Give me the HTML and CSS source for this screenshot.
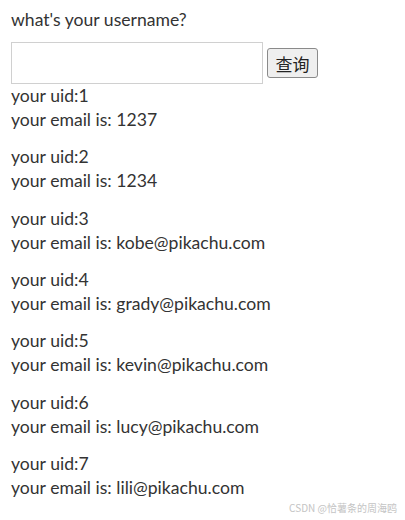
FILE: index.html
```html
<!DOCTYPE html>
<html lang="zh">
<head>
  <meta charset="UTF-8" />
  <title>查询</title>
  <meta name="viewport" content="width=device-width, initial-scale=1.0">
  <link rel="stylesheet" href="styles.css">
</head>
<body>
  <div class="page">
    <form class="search-form">
      <p class="question">what's your username?</p>
      <div class="search-row">
        <input type="text" class="search-input" name="username">
        <input type="submit" class="search-btn" value="查询">
      </div>
    </form>

    <div class="result-list">
      <p class="result">your uid:1<br>your email is: 1237</p>
      <p class="result">your uid:2<br>your email is: 1234</p>
      <p class="result">your uid:3<br>your email is: kobe@pikachu.com</p>
      <p class="result">your uid:4<br>your email is: grady@pikachu.com</p>
      <p class="result">your uid:5<br>your email is: kevin@pikachu.com</p>
      <p class="result">your uid:6<br>your email is: lucy@pikachu.com</p>
      <p class="result">your uid:7<br>your email is: lili@pikachu.com</p>
    </div>
  </div>

  <div class="watermark">CSDN @恰薯条的周海鸥</div>
</body>
</html>
```

FILE: styles.css
```css
* { margin: 0; padding: 0; box-sizing: border-box; }

body {
  font-family: Lato, "Noto Sans CJK SC", sans-serif;
  font-size: 17.6px;
  line-height: 24px;
  color: #333;
  background: #fff;
  padding: 8px 11px 0;
}

.question { margin-bottom: 10px; }

.search-row {
  display: flex;
  align-items: center;
  gap: 4px;
}

.search-input {
  width: 252px; height: 42px;
  border: 1px solid #d0d0d0;
  outline: none;
}

.search-btn {
  width: 51px; height: 30px;
  font-family: "Noto Sans CJK SC", sans-serif;
  font-size: 17px;
  color: #222;
  background: #efefef;
  border: 1px solid #8a8a8a;
  border-radius: 3px;
}

.result { margin-bottom: 13.33px; }

.watermark {
  position: absolute;
  right: 8px; bottom: 6px;
  font-family: "Noto Sans CJK SC", sans-serif;
  font-size: 10px;
  line-height: 12px;
  color: #c4c4c4;
}
```
